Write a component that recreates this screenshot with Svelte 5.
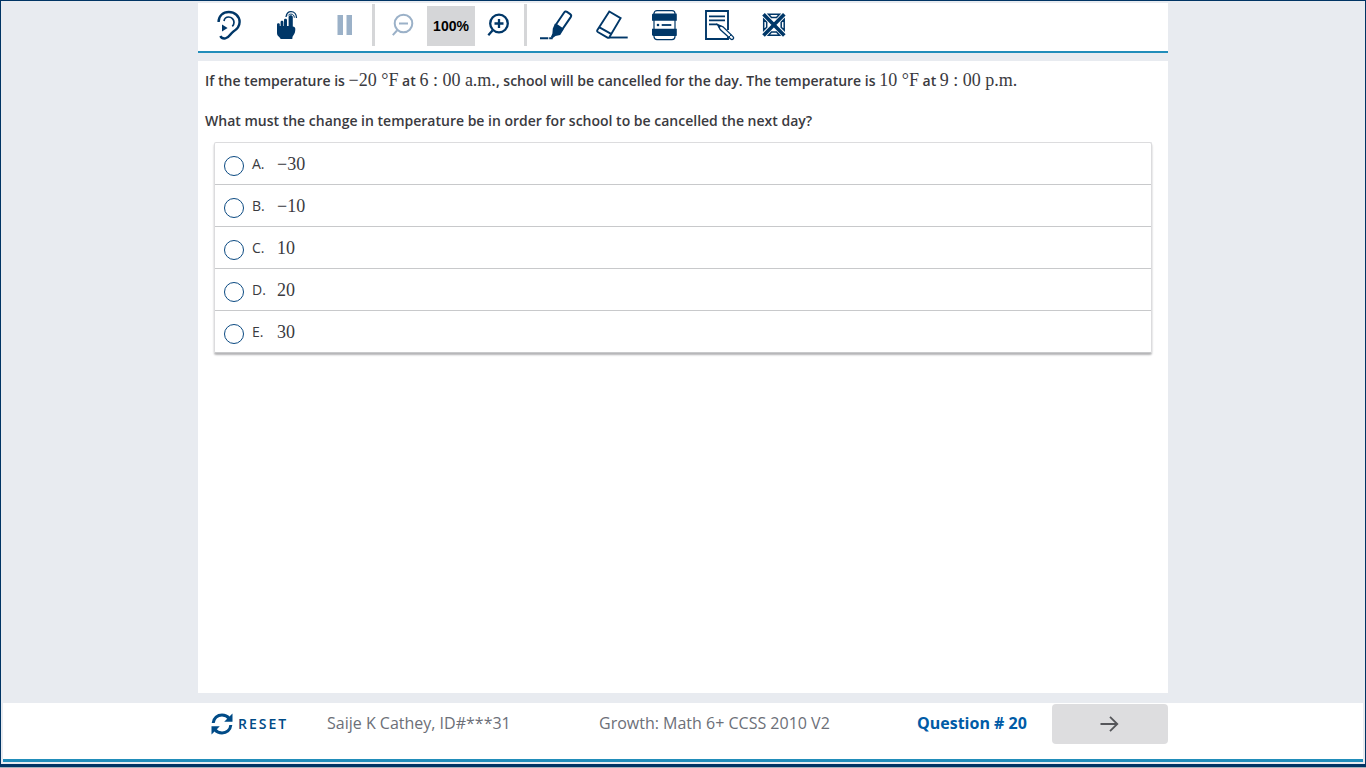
<script>
	const choices = [
		{ letter: 'A', value: '−30' },
		{ letter: 'B', value: '−10' },
		{ letter: 'C', value: '10' },
		{ letter: 'D', value: '20' },
		{ letter: 'E', value: '30' }
	];

	let selected = $state(null);

	function reset() {
		selected = null;
	}
</script>

<div class="page">
	<header class="toolbar">
		<button class="tool" aria-label="Read aloud">
			<svg viewBox="0 0 36 32">
				<g class="line">
					<path stroke-width="2.4" d="M7.600 13C7.400 7 12 3 17.800 3S28.600 7 28.600 13c0 5-3 7.500-6.200 9.500-3.400 2.200-4 6.300-8 6.900-2 .3-4.200-.6-5-2.400" />
					<path stroke-width="1.700" d="M13 12c.4-2.500 2.200-4 4.600-4 3 0 5.400 2.300 5.400 5.200 0 1.700-.6 3-1.700 4.100" />
				</g>
				<path class="solid" d="M11 15.500l5.600 3.500-5.600 3.500z" />
			</svg>
		</button>
		<button class="tool" aria-label="Touch">
			<svg viewBox="0 0 36 32">
				<path class="solid" d="M8 15.500c0-1.600 2.800-1.600 2.800 0v1.500h.8v-4c0-1.600 2.800-1.600 2.800 0v4h.6v-6c0-1.600 3-1.600 3 0v6h1.600V8c0-2.300 4.200-2.300 4.200 0v9.500c1.600 0 2.500 1 2.500 2.500 0 3-.6 4.600-2 6.500-.9 1.200-.9 2.200-1 3.500H11.500c0-2-3.500-2.500-3.500-6z" />
				<path class="line" stroke-width="1.300" d="M17 8c.5-3.500 2.400-5.300 5-5.300 3.300 0 5.500 2.600 5.500 6.300" />
				<path class="line" d="M19 6.500c.8-1 1.800-1.400 3-1.400 2 0 3.300 1.300 3.300 3.600" />
			</svg>
		</button>
		<button class="tool off" aria-label="Pause">
			<svg viewBox="0 0 36 32">
				<path class="solid" d="M11.500 6H17v20h-5.500zM20.500 6H26v20h-5.500z" />
			</svg>
		</button>
		<span class="rule"></span>
		<button class="tool off" aria-label="Zoom out">
			<svg viewBox="0 0 36 32">
				<g class="line" stroke-width="2">
					<circle cx="20.500" cy="14.500" r="8.800" />
					<path d="M14 21.500l-4.200 4.700M16 14.500h9" />
				</g>
			</svg>
		</button>
		<output class="zoom">100%</output>
		<button class="tool" aria-label="Zoom in">
			<svg viewBox="3.5 0 36 32">
				<g class="line" stroke-width="2.300">
					<circle cx="20.500" cy="14.500" r="8.800" />
					<path d="M14 21.500l-4.200 4.700M16 14.500h9M20.500 10v9" />
				</g>
			</svg>
		</button>
		<span class="rule"></span>
		<div class="marks">
			<button class="mark" aria-label="Highlighter">
				<svg viewBox="0 0 36 32">
					<path class="line" stroke-width="2" d="M18 15.500L26 3.700c.8-1.200 2-1.500 3-.8l3.200 2.200c1 .7 1.200 1.900.5 3L24.500 20z" />
					<path class="solid" d="M17 14.500l8.600 6-3.400 5.500-4.700 1-3 2.200-1.600-1.100 1.500-3.600.4-5z" />
					<path class="line" stroke-width="2" d="M2 29.300h8.300M11.200 29.300h3.500" />
				</svg>
			</button>
			<button class="mark" aria-label="Eraser">
				<svg viewBox="0 0 36 32">
					<g class="line" stroke-width="1.900">
						<path d="M17.300 2.500L28.600 9.200 17.500 28c-.5.900-1.200 1.100-2 .6L5.800 23c-.8-.5-.9-1.200-.4-2zM7.500 18.300l11.600 6.600" />
						<path d="M17 28.500h18.700" />
					</g>
				</svg>
			</button>
			<button class="mark" aria-label="Line reader">
				<svg viewBox="0 0 36 32">
					<rect class="line" stroke-width="1.200" x="8" y="1.600" width="21" height="29" rx="3" />
					<path class="solid" d="M7 4.500h23.500l.3 1v6.300H6V5.500zM6 19.800h24.800V26l-.3 1H7l-1-1z" />
					<circle class="solid" cx="12" cy="16" r="1.300" />
					<path class="line" stroke-width="1.800" d="M15.700 16h9.600" />
				</svg>
			</button>
			<button class="mark" aria-label="Notepad">
				<svg viewBox="0 0 36 32">
					<g class="line" stroke-width="1.900">
						<path d="M28 21V2H6v28h22v-2" />
						<path d="M9 7.400h16M9 11.400h16M9 15.400h8.500" />
					</g>
					<path class="pencil" d="M17.500 15.500l5.500 2.300 10 9.800c.8.800.8 1.700.1 2.400s-1.600.7-2.400 0l-10.500-9.500z" />
					<path class="solid" d="M17 15l4.500 1.800-2.300 2.700z" />
					<path class="line" d="M28.800 28.200l2.500-2.500" />
				</svg>
			</button>
			<button class="mark" aria-label="Answer eliminator">
				<svg viewBox="0 0 36 32">
					<g class="line">
						<path stroke-width="3.600" d="M9.500 5.200l20.800 21.400M30.300 5.200L9.500 26.600" />
						<path stroke-width="1.500" d="M14.500 5.300h11l-3 3.200h-5zM14.500 26.300h11l-3-3.200h-5zM9.700 10.300v11l3-3v-5zM30.200 10.300v11l-3-3v-5z" />
					</g>
				</svg>
			</button>
		</div>
	</header>

	<main>
		<p>
			If the temperature is <span class="math">−20 °F</span> at <span class="math">6 : 00 a.m.</span>, school will be cancelled for the day. The temperature is <span class="math">10 °F</span> at <span class="math">9 : 00 p.m.</span>
		</p>
		<p id="question">What must the change in temperature be in order for school to be cancelled the next day?</p>

		<div class="choices" role="radiogroup" aria-labelledby="question">
			{#each choices as choice}
				<label class="choice">
					<input type="radio" name="answer" value={choice.letter} bind:group={selected} />
					<span class="letter">{choice.letter}.</span>
					<span class="math">{choice.value}</span>
				</label>
			{/each}
		</div>
	</main>

	<footer>
		<div class="status">
			<button class="reset" onclick={reset}>
				<svg viewBox="0 0 22 22">
					<path class="line" stroke-width="3" d="M2.200 10C2.600 5 6.500 2 11 2c3 0 5.400 1.200 7 3.200M19.800 12c-.4 5-4.300 8-8.800 8-3 0-5.400-1.200-7-3.200" />
					<path class="solid" d="M21.500.5v8.300h-8.300zM.5 21.500v-8.300h8.300z" />
				</svg>
				RESET
			</button>
			<span>Saije K Cathey, ID#***31</span>
			<span>Growth: Math 6+ CCSS 2010 V2</span>
			<strong>Question # 20</strong>
			<button class="next" aria-label="Next question">
				<svg viewBox="0 0 20 20">
					<path class="line" stroke-width="1.800" d="M.5 10h17M10 2.800l7.300 7.200-7.300 7.200" />
				</svg>
			</button>
		</div>
	</footer>
</div>

<style>
	:global(body) {
		background: #a5b1bb;
	}

	.page {
		box-sizing: border-box;
		min-height: calc(100vh - 1px);
		display: flex;
		flex-direction: column;
		padding: 2px;
		border: 1px solid #003464;
		border-bottom-width: 3px;
		background: #e8ebf0;
		color: #3a3a40;
		font-family: "Open Sans", sans-serif;
		font-size: 14px;
		line-height: 20px;
	}

	button {
		padding: 0;
		border: 0;
		background: none;
		color: #003768;
		font: inherit;
		cursor: pointer;
	}

	svg {
		display: block;
	}

	.line {
		fill: none;
		stroke: currentColor;
	}

	.solid {
		fill: currentColor;
	}

	.toolbar {
		box-sizing: border-box;
		width: 100%;
		max-width: 970px;
		height: 50px;
		margin: 0 auto 8px;
		padding: 0 2px 4px;
		display: flex;
		align-items: center;
		border-bottom: 2px solid #218dba;
		background: #fff;
	}

	.tool {
		width: 58px;
		display: flex;
		justify-content: center;
	}

	.tool svg,
	.mark svg {
		width: 36px;
		height: 32px;
	}

	.tool.off {
		width: 56px;
		color: #9bb1c8;
	}

	.rule {
		width: 3px;
		height: 42px;
		background: #d5d6d8;
	}

	.rule + .tool {
		width: 52px;
	}

	.zoom {
		width: 48px;
		margin-top: 2px;
		background: #d5d6d8;
		color: #000;
		font: bold 14px/40px "Liberation Sans", Arial, sans-serif;
		text-align: center;
	}

	.zoom + .tool {
		width: 49px;
	}

	.marks {
		display: flex;
		gap: 18px;
		padding-left: 11px;
	}

	.pencil {
		fill: #fff;
		stroke: currentColor;
		stroke-width: 1.3;
	}

	main {
		box-sizing: border-box;
		width: 100%;
		max-width: 970px;
		flex: 1;
		margin: 0 auto 10px;
		padding: 9px 7px;
		background: #fff;
	}

	p {
		margin: 0 0 20px;
		font-weight: 600;
	}

	.math {
		font-family: "Liberation Serif", "Times New Roman", serif;
		font-size: 18px;
		font-weight: normal;
	}

	#question {
		margin-bottom: 11px;
	}

	.choices {
		margin: 0 9px;
		border: 1px solid #dcdcde;
		border-bottom: 0;
		border-radius: 2px;
		box-shadow: 0 2px 2px #b4b4b6;
	}

	.choice {
		height: 41px;
		display: flex;
		align-items: center;
		padding-left: 9px;
		border-bottom: 1px solid #c8c9cb;
	}

	.choice input {
		appearance: none;
		width: 20px;
		height: 20px;
		margin: 4px 8px 0 0;
		border: 1px solid #0b4a82;
		border-radius: 50%;
		background: #fff;
	}

	.choice input:checked {
		background: #0b4a82;
		box-shadow: inset 0 0 0 4px #fff;
	}

	.letter {
		width: 25px;
	}

	footer {
		border-bottom: 3px solid #218dba;
		background: #fff;
		color: #6c6f78;
		font-size: 16px;
	}

	.status {
		max-width: 970px;
		height: 56px;
		margin: 0 auto;
		display: grid;
		grid-template-columns: 129px 272px 318px 1fr 116px;
		align-items: center;
	}

	.status > * {
		margin-bottom: 16px;
	}

	.status > button {
		margin-bottom: 14px;
	}

	.reset {
		display: flex;
		align-items: center;
		gap: 5px;
		padding-left: 13px;
		color: #004b87;
		font-size: 14px;
		font-weight: 600;
		letter-spacing: 2px;
	}

	.reset svg {
		width: 22px;
		height: 22px;
	}

	strong {
		color: #005ba6;
	}

	.next {
		height: 40px;
		border-radius: 4px;
		background: #dddddf;
		color: #55565a;
	}

	.next svg {
		width: 20px;
		height: 20px;
		margin: 0 auto;
	}
</style>
